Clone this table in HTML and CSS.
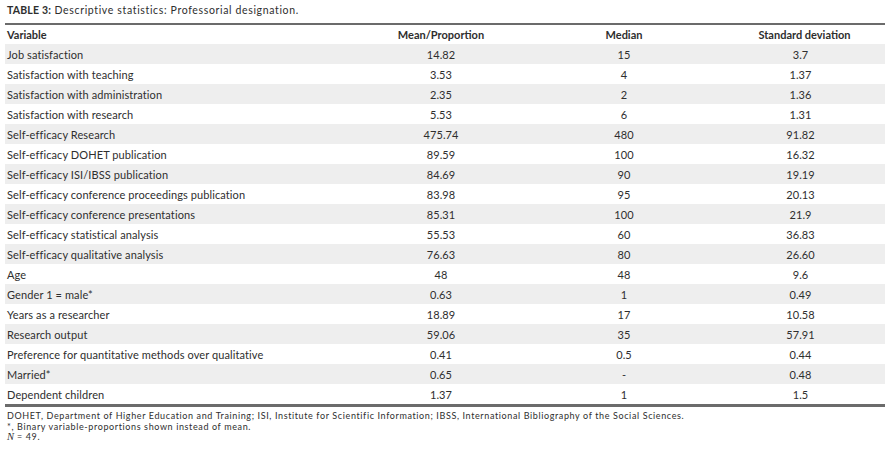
FILE: index.html
```html
<!DOCTYPE html>
<html>
<head>
<meta charset="utf-8">
<link rel="stylesheet" href="styles.css">
</head>
<body>
<div class="page">
  <p class="caption"><b>TABLE 3:</b> Descriptive statistics: Professorial designation.</p>
  <table class="stats">
    <colgroup>
      <col class="c-var"><col class="c-mean"><col class="c-med"><col class="c-sd">
    </colgroup>
    <thead>
      <tr><th class="left">Variable</th><th>Mean/Proportion</th><th>Median</th><th class="sd">Standard deviation</th></tr>
    </thead>
    <tbody>
      <tr><td class="left">Job satisfaction</td><td>14.82</td><td>15</td><td>3.7</td></tr>
      <tr><td class="left">Satisfaction with teaching</td><td>3.53</td><td>4</td><td>1.37</td></tr>
      <tr><td class="left">Satisfaction with administration</td><td>2.35</td><td>2</td><td>1.36</td></tr>
      <tr><td class="left">Satisfaction with research</td><td>5.53</td><td>6</td><td>1.31</td></tr>
      <tr><td class="left">Self-efficacy Research</td><td>475.74</td><td>480</td><td>91.82</td></tr>
      <tr><td class="left">Self-efficacy DOHET publication</td><td>89.59</td><td>100</td><td>16.32</td></tr>
      <tr><td class="left">Self-efficacy ISI/IBSS publication</td><td>84.69</td><td>90</td><td>19.19</td></tr>
      <tr><td class="left">Self-efficacy conference proceedings publication</td><td>83.98</td><td>95</td><td>20.13</td></tr>
      <tr><td class="left">Self-efficacy conference presentations</td><td>85.31</td><td>100</td><td>21.9</td></tr>
      <tr><td class="left">Self-efficacy statistical analysis</td><td>55.53</td><td>60</td><td>36.83</td></tr>
      <tr><td class="left">Self-efficacy qualitative analysis</td><td>76.63</td><td>80</td><td>26.60</td></tr>
      <tr><td class="left">Age</td><td>48</td><td>48</td><td>9.6</td></tr>
      <tr><td class="left">Gender 1 = male*</td><td>0.63</td><td>1</td><td>0.49</td></tr>
      <tr><td class="left">Years as a researcher</td><td>18.89</td><td>17</td><td>10.58</td></tr>
      <tr><td class="left">Research output</td><td>59.06</td><td>35</td><td>57.91</td></tr>
      <tr><td class="left">Preference for quantitative methods over qualitative</td><td>0.41</td><td>0.5</td><td>0.44</td></tr>
      <tr><td class="left">Married*</td><td>0.65</td><td>-</td><td>0.48</td></tr>
      <tr><td class="left">Dependent children</td><td>1.37</td><td>1</td><td>1.5</td></tr>
    </tbody>
  </table>
  <div class="notes">
    <p>DOHET, Department of Higher Education and Training; ISI, Institute for Scientific Information; IBSS, International Bibliography of the Social Sciences.</p>
    <p>*, Binary variable-proportions shown instead of mean.</p>
    <p><i class="n">N</i> = 49.</p>
  </div>
</div>
</body>
</html>
```

FILE: styles.css
```css
html, body {
  margin: 0;
  padding: 0;
  background: #ffffff;
}

.page {
  padding: 4px 1px 0 5px;
  font-family: Lato, "Liberation Sans", sans-serif;
  color: #2e2e2e;
}

.caption {
  margin: 0 0 0 2px;
  height: 19px;
  line-height: 13px;
  font-size: 10.5px;
  letter-spacing: 0.65px;
}

.caption b {
  font-weight: 700;
  letter-spacing: 0.2px;
}

.stats {
  width: 880px;
  border-collapse: collapse;
  table-layout: fixed;
  font-size: 11px;
  letter-spacing: 0.1px;
  border-top: 2px solid #6b6b6b;
  border-bottom: 3px solid #6b6b6b;
}

.c-var { width: 345px; }
.c-mean { width: 182px; }
.c-med { width: 184px; }
.c-sd { width: 169px; }

.stats th,
.stats td {
  height: 20px;
  padding: 0;
  text-align: center;
  vertical-align: middle;
  white-space: nowrap;
}

.stats th {
  height: 19px;
  font-weight: 700;
  letter-spacing: 0;
}

.stats th.sd {
  padding-left: 8px;
}

.stats .left {
  text-align: left;
  padding-left: 2px;
}

.stats tbody tr:nth-child(odd) {
  background: #eeeeee;
}

.notes {
  margin-top: 4px;
  padding-left: 2px;
  font-size: 9px;
  letter-spacing: 0.62px;
  line-height: 10.5px;
}

.notes p {
  margin: 0;
}

.notes .n {
  font-family: "Liberation Serif", serif;
  font-size: 10.5px;
  letter-spacing: 0;
}
```
